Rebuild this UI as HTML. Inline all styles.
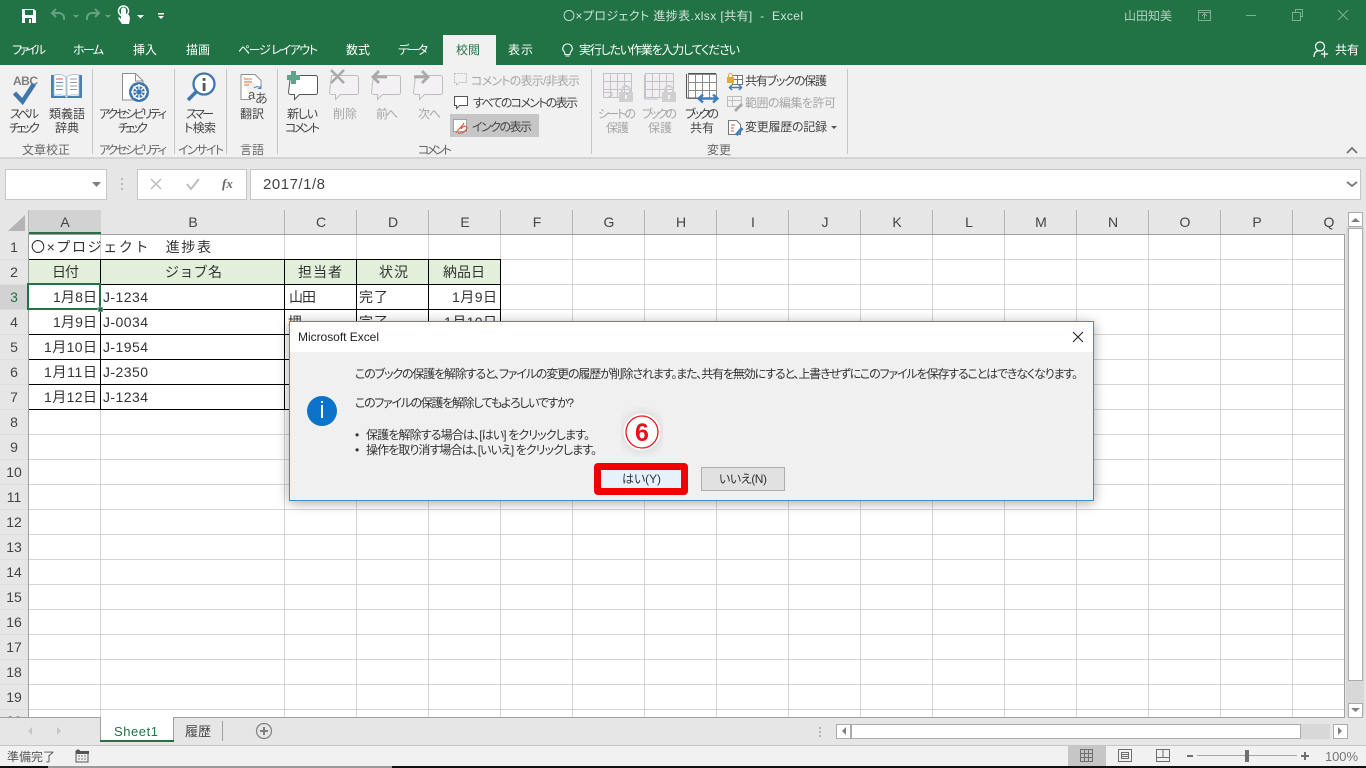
<!DOCTYPE html>
<html lang="ja"><head><meta charset="utf-8"><title>Excel</title>
<style>
html,body{margin:0;padding:0;background:#fff;overflow:hidden}
svg{display:block}
text{font-family:"Liberation Sans","Noto Sans CJK JP",sans-serif;font-size:12px;fill:#444;white-space:pre;font-feature-settings:"palt"}
.w{fill:#fff}.d{fill:#a6a6a6}.g{fill:#666}.c{font-size:14px;fill:#333;font-feature-settings:normal}.h{font-size:14px;fill:#444;text-anchor:middle;font-feature-settings:normal}
.b{font-size:12px;fill:#333}
.l{shape-rendering:crispEdges}
</style></head><body>
<svg xmlns="http://www.w3.org/2000/svg" width="1366" height="768" viewBox="0 0 1366 768">
<defs>
<filter id="s" x="-5%" y="-15%" width="110%" height="130%"><feGaussianBlur stdDeviation="6"/></filter>
<g id="bub"><path d="M1.500 1.500h25a2 2 0 0 1 2 2v15a2 2 0 0 1-2 2h-16l-5 5v-5h-4a2 2 0 0 1-2-2z" /></g>
<g id="gr"><path d="M.5.5h28v24h-28zM.5 8.500h28M.5 16.500h28M7.500.5v24M14.500.5v24M21.500.5v24"/></g>
<g id="lock"><rect x="0" y="6" width="14" height="10" rx="1" fill="#cfcfd2"/><path d="M3 6.500V4a4 4 0 0 1 8 0v2.500" fill="none" stroke="#cfcfd2" stroke-width="2"/><rect x="6" y="9" width="2" height="4" fill="#f1f1f1"/></g>
</defs>

<!-- Title bar / tabs -->
<rect width="1366" height="65" fill="#217346"/>
<rect x="0" y="65" width="1366" height="93" fill="#f1f1f1"/>
<rect x="0" y="158" width="1366" height="560" fill="#e6e6e6"/>
<rect x="0" y="157" width="1366" height="2" fill="#d4d4d4" class="l"/>

<!-- QAT -->
<path d="M22 9h12l2 2v12H22z" fill="#fff"/><rect x="25" y="10" width="8" height="5" fill="#217346"/><rect x="25" y="18" width="7" height="5" fill="#217346"/><rect x="29" y="19" width="2" height="4" fill="#fff"/>
<path d="M56 9l-4 4 4 4M52 13h7a5 5 0 0 1 5 5v2" fill="none" stroke="#66a282" stroke-width="2"/>
<path d="M73 15h6l-3 3z" fill="#66a282"/>
<path d="M95 9l4 4-4 4M99 13h-7a5 5 0 0 0-5 5v2" fill="none" stroke="#66a282" stroke-width="2"/>
<path d="M105 15h6l-3 3z" fill="#66a282"/>
<path d="M121 15V10a2.500 2.500 0 0 1 5 0v4l3 1 1 3-1 6h-7l-4-6 1-1 2 2z" fill="#fff"/><circle cx="123.500" cy="11" r="5" fill="none" stroke="#fff" stroke-width="1.500"/>
<path d="M137 15h7l-3.500 3.500z" fill="#fff"/>
<rect x="158" y="13" width="6" height="1.500" fill="#fff"/><path d="M158 16h6l-3 3z" fill="#fff"/>

<text x="563" y="20" textLength="240" style="fill:#d3e3d9">〇×プロジェクト 進捗表.xlsx [共有]  -  Excel</text>
<text x="1124" y="20" textLength="48" style="fill:#b5d2c1">山田知美</text>
<g fill="none" stroke="#7fae94" stroke-width="1" class="l">
<path d="M1198.500 10.500h12v10h-12zM1198.500 12.500h12M1204.500 19v-5M1202 16l2.500-2.500 2.500 2.500"/>
<path d="M1246 15.500h10"/>
<path d="M1292.500 12.500h8v8h-8zM1295.500 12.500v-3h7v7h-2"/>
</g>
<path d="M1338 10l10 10M1348 10l-10 10" stroke="#7fae94" fill="none"/>

<rect x="443" y="35" width="53" height="30" fill="#f1f1f1"/>
<text class="w" x="12" y="54" textLength="34">ファイル</text>
<text class="w" x="73" y="54" textLength="31">ホーム</text>
<text class="w" x="133" y="54" textLength="24">挿入</text>
<text class="w" x="186" y="54" textLength="24">描画</text>
<text class="w" x="238" y="54" textLength="80">ページ レイアウト</text>
<text class="w" x="346" y="54" textLength="24">数式</text>
<text class="w" x="398" y="54" textLength="30">データ</text>
<text x="456" y="54" textLength="24" style="fill:#217346">校閲</text>
<text class="w" x="508" y="54" textLength="25">表示</text>
<path d="M567.500 44a4.500 4.500 0 0 0-3 8l.5 2.500h5l.5-2.500a4.500 4.500 0 0 0-3-8zM565.500 56h4" fill="none" stroke="#fff" stroke-width="1.100"/>
<text class="w" x="579" y="54" textLength="161">実行したい作業を入力してください</text>
<circle cx="1320" cy="46.500" r="4.500" fill="none" stroke="#fff" stroke-width="1.200"/>
<path d="M1314 57c0-5 2.500-6.500 6-6.500M1321 54h7M1324.500 50.500v7" fill="none" stroke="#fff" stroke-width="1.200"/>
<text class="w" x="1335" y="54" textLength="24">共有</text>

<!-- Ribbon separators -->
<path class="l" d="M92.500 69v85M174.500 69v85M226.500 69v85M277.500 69v85M591.500 69v85M847.500 69v85" stroke="#c6c6c6" fill="none"/>

<!-- Spell -->
<text x="13" y="85" textLength="25" style="font-size:12px;font-weight:bold;fill:#7f7f7f">ABC</text>
<path d="M14.500 93l8 8.500L34 84" fill="none" stroke="#3f76ad" stroke-width="4.500"/>
<text x="10" y="118" textLength="29">スペル</text>
<text x="9" y="132" textLength="31">チェック</text>
<!-- Book -->
<path d="M51 75h3v21h11l1.500 2h-15.500zM82 75h-3v21h-11l-1.500 2h15.500z" fill="#4a7fb5"/>
<path d="M54 75c5-1 9-.5 12 2v19c-3-1.500-7-1.500-12-1zM79 75c-5-1-9-.5-12 2v19c3-1.500 7-1.500 12-1z" fill="#fff" stroke="#9db6cf" stroke-width=".8"/>
<path d="M56 79h7" stroke="#d9604c"/><path d="M56 82.500h7M56 86h7M56 89.500h7" stroke="#6d94bd"/><path d="M70 79h7M70 82.500h7M70 86h7M70 89.500h7" stroke="#9a9a9a"/>
<text x="49" y="118" textLength="36">類義語</text>
<text x="55" y="132" textLength="24">辞典</text>
<text class="g" x="22" y="154" textLength="48">文章校正</text>
<!-- Accessibility -->
<path d="M122.500 73.500h13l7.500 7.500v19h-20.500z" fill="#fff" stroke="#8f8f8f"/><path d="M135.500 73.500v7.500h7.500" fill="none" stroke="#8f8f8f"/>
<circle cx="139" cy="92" r="10" fill="#3f76ad"/>
<circle cx="139" cy="92" r="6.500" fill="none" stroke="#fff" stroke-width="1.500"/>
<path d="M139 84v16M131 92h16M133.500 86.500l11 11M144.500 86.500l-11 11" stroke="#fff" stroke-width="1.300"/><circle cx="139" cy="92" r="2.500" fill="#3f76ad"/>
<text x="99" y="118" textLength="68">アクセシビリティ</text>
<text x="118" y="132" textLength="30">チェック</text>
<text class="g" x="99" y="154" textLength="68">アクセシビリティ</text>
<!-- Smart lookup -->
<circle cx="204" cy="84" r="10.500" fill="#fff" stroke="#3f76ad" stroke-width="2.300"/>
<path d="M196 92l-8 8" stroke="#3f76ad" stroke-width="3.500" fill="none"/>
<rect x="202.700" y="83" width="2.800" height="8" fill="#555"/><rect x="202.700" y="78" width="2.800" height="2.800" fill="#555"/>
<text x="186" y="118" textLength="28">スマー</text>
<text x="184" y="132" textLength="32">ト検索</text>
<text class="g" x="178" y="154" textLength="46">インサイト</text>
<!-- Translate -->
<path d="M241 74.500h14l6 6V88M251 99.500h-10V74.500" fill="#fff" stroke="#8f8f8f"/>
<path d="M244 79h8M244 82h8M244 85h5" stroke="#ed7d31" fill="none"/>
<path d="M254 88a5 5 0 0 1 7 0M261 85v3.500h-3" fill="none" stroke="#3f86c4"/>
<text x="248" y="99" style="font-size:13px;fill:#555">a</text>
<text x="255" y="103" style="font-size:13px;fill:#555">あ</text>
<text x="240" y="118" textLength="24">翻訳</text>
<text class="g" x="240" y="154" textLength="24">言語</text>
<!-- Comments -->
<use href="#bub" x="289" y="74" fill="#fff" stroke="#555" stroke-width="1"/>
<path d="M291 71h5v4h4v5h-4v4h-5v-4h-4v-5h4z" fill="#5da58a"/>
<text x="287" y="118" textLength="31">新しい</text>
<text x="285" y="132" textLength="35">コメント</text>
<use href="#bub" x="330" y="74" fill="#f4f1f5" stroke="#bdbdbd"/>
<path d="M331 70l13 13M344 70l-13 13" stroke="#a9a9a9" stroke-width="2.500"/>
<text class="d" x="333" y="118" textLength="24">削除</text>
<use href="#bub" x="372" y="74" fill="#f4f1f5" stroke="#bdbdbd"/>
<path d="M373 77h14M379 71l-6 6 6 6" fill="none" stroke="#a9a9a9" stroke-width="2.800"/>
<text class="d" x="376" y="118" textLength="22">前へ</text>
<use href="#bub" x="414" y="74" fill="#f4f1f5" stroke="#bdbdbd"/>
<path d="M414 77h14M422 71l6 6-6 6" fill="none" stroke="#a9a9a9" stroke-width="2.800"/>
<text class="d" x="418" y="118" textLength="23">次へ</text>
<text class="g" x="418" y="154" textLength="34">コメント</text>
<path d="M454.500 73.500h12v9h-7l-3 3v-3h-2z" fill="none" stroke="#bdbdbd" stroke-dasharray="2 1"/>
<text class="d" x="471" y="85" textLength="109">コメントの表示/非表示</text>
<path d="M454.500 96.500h13v9h-8l-3 3v-3h-2z" fill="#fff" stroke="#555"/>
<text x="473" y="107" textLength="105">すべてのコメントの表示</text>
<rect x="450" y="114" width="89" height="23" fill="#c6c6c6"/>
<rect x="453.500" y="119.500" width="13" height="12" fill="#fff" stroke="#666" stroke-dasharray="1 1"/>
<path d="M456 133c2-4 6-6 8-10M458 133c4 1 8-2 9-5-1-3-4-2-6 1" fill="none" stroke="#d9583a" stroke-width="1.200"/>
<text x="472" y="131" textLength="60">インクの表示</text>
<!-- Changes -->
<g fill="#f1eff2" stroke="#c4c2c6" class="l"><use href="#gr" x="603" y="73"/></g>
<path d="M603 92.500h9v3l-4 2" fill="none" stroke="#c4c2c6"/>
<use href="#lock" x="619" y="86"/>
<text class="d" x="598" y="118" textLength="38">シートの</text>
<text class="d" x="606" y="132" textLength="23">保護</text>
<g fill="#f1eff2" stroke="#c4c2c6" class="l"><use href="#gr" x="645" y="73"/></g>
<path d="M644.500 75v24h14" fill="none" stroke="#c4c2c6"/>
<use href="#lock" x="662" y="86"/>
<text class="d" x="642" y="118" textLength="35">ブックの</text>
<text class="d" x="648" y="132" textLength="24">保護</text>
<g fill="#fff" stroke="#8a8a8a" class="l"><use href="#gr" x="688" y="74"/></g>
<path d="M686.500 74v24h11" fill="none" stroke="#555"/>
<path d="M688 73.500h28" stroke="#555" class="l"/>
<path d="M700 98.500h16M703 94.500l-4.500 4 4.500 4M713 94.500l4.500 4-4.500 4" fill="none" stroke="#3f7fbe" stroke-width="2.400"/>
<text x="685" y="118" textLength="34">ブックの</text>
<text x="690" y="132" textLength="24">共有</text>
<text x="745" y="85" textLength="82">共有ブックの保護</text>
<text class="d" x="745" y="107" textLength="91">範囲の編集を許可</text>
<text x="745" y="131" textLength="82">変更履歴の記録</text>
<path d="M831 126h6l-3 3z" fill="#555"/>
<text class="g" x="707" y="154" textLength="24">変更</text>
<g fill="#fff" stroke="#777" class="l"><path d="M732.500 75.500h10v9h-10zM732.500 79.500h10M737.500 75.500v9"/></g>
<rect x="727" y="77" width="7" height="6" fill="#e2a93c"/><path d="M728.500 77v-1.500a2 2 0 0 1 4 0V77" fill="none" stroke="#e2a93c"/>
<path d="M730 87.500h11M732 85l-2.500 2.500 2.500 2.500M739 85l2.500 2.500-2.500 2.500" fill="none" stroke="#3f7fbe" stroke-width="1.500"/>
<g fill="#f1f1f1" stroke="#bdbdbd" class="l"><path d="M727.500 96.500h14v10h-14zM727.500 100.500h14M732.500 96.500v10"/></g>
<path d="M734 110l7-7 2 2-7 7z" fill="#a9a9a9"/>
<path d="M728.500 120.500h8l4 4v10h-12z" fill="#fff" stroke="#777"/><path d="M731 125h4M731 128h3M731 131h3" stroke="#d9583a"/>
<path d="M735 134l6-7 2.500 2-6 7z" fill="#3f7fbe"/>
<path d="M1347 153l5-5 5 5" fill="none" stroke="#777" stroke-width="1.800"/>

<!-- Formula bar -->
<g class="l" fill="#fff" stroke="#c6c6c6">
<rect x="5.500" y="169.500" width="101" height="30"/>
<rect x="137.500" y="169.500" width="109" height="30"/>
<rect x="250.500" y="169.500" width="1110" height="30"/>
</g>
<path d="M92 182h9l-4.500 5z" fill="#808080"/>
<path d="M122 178v2M122 183v2M122 188v2" stroke="#a6a6a6" stroke-width="1.500"/>
<path d="M151 179l10 10M161 179l-10 10" stroke="#bdbdbd" stroke-width="1.500"/>
<path d="M187 184l4 5 8-10" fill="none" stroke="#bdbdbd" stroke-width="2"/>
<text x="222" y="188" style="font-family:'Liberation Serif',serif;font-style:italic;font-weight:bold;font-size:13px;fill:#666">fx</text>
<path d="M1347 182l5 4 5-4" fill="none" stroke="#777" stroke-width="1.800"/>
<text x="263" y="189" textLength="62" style="font-size:15px;fill:#444">2017/1/8</text>

<!-- Grid -->
<rect x="29" y="235" width="1315" height="482" fill="#fff"/>
<rect x="29" y="210" width="72" height="24" fill="#d2d2d2"/>
<rect x="0" y="285" width="28" height="25" fill="#d2d2d2"/>
<path d="M8 231l17-16v16z" fill="#b4b4b4"/>
<path class="l" fill="none" stroke="#b5b5b5" d="M284.500 210v24M356.500 210v24M428.500 210v24M500.500 210v24M572.500 210v24M644.500 210v24M716.500 210v24M788.500 210v24M860.500 210v24M932.500 210v24M1004.500 210v24M1076.500 210v24M1148.500 210v24M1220.500 210v24M1292.500 210v24M28.500 210v24"/>
<path class="l" fill="none" stroke="#d4d4d4" d="M100.500 235V717M284.500 235V717M356.500 235V717M428.500 235V717M500.500 235V717M572.500 235V717M644.500 235V717M716.500 235V717M788.500 235V717M860.500 235V717M932.500 235V717M1004.500 235V717M1076.500 235V717M1148.500 235V717M1220.500 235V717M1292.500 235V717
M29 259.500H1344M29 284.500H1344M29 309.500H1344M29 334.500H1344M29 359.500H1344M29 384.500H1344M29 409.500H1344M29 434.500H1344M29 459.500H1344M29 484.500H1344M29 509.500H1344M29 534.500H1344M29 559.500H1344M29 584.500H1344M29 609.500H1344M29 634.500H1344M29 659.500H1344M29 684.500H1344M29 709.500H1344"/>
<path class="l" fill="none" stroke="#dcdcdc" d="M0 259.500H28M0 284.500H28M0 309.500H28M0 334.500H28M0 359.500H28M0 384.500H28M0 409.500H28M0 434.500H28M0 459.500H28M0 484.500H28M0 509.500H28M0 534.500H28M0 559.500H28M0 584.500H28M0 609.500H28M0 634.500H28M0 659.500H28M0 684.500H28M0 709.500H28"/>
<path class="l" fill="none" stroke="#9f9f9f" d="M28.500 234V717M28 234.500H1344M1344.500 234V717"/>
<rect x="29" y="232" width="72" height="2" fill="#217346"/>
<rect x="29" y="260" width="471" height="24" fill="#e2efda"/>
<path class="l" fill="none" stroke="#000" d="M29 259.500H500.500M29 284.500H500.500M29 309.500H500.500M29 334.500H500.500M29 359.500H500.500M29 384.500H500.500M29 409.500H500.500M100.500 259V410M284.500 259V410M356.500 259V410M428.500 259V410M500.500 259V410"/>

<text class="h" x="65" y="227">A</text><text class="h" x="193" y="227">B</text><text class="h" x="321" y="227">C</text><text class="h" x="393" y="227">D</text><text class="h" x="465" y="227">E</text><text class="h" x="537" y="227">F</text><text class="h" x="609" y="227">G</text><text class="h" x="681" y="227">H</text><text class="h" x="753" y="227">I</text><text class="h" x="825" y="227">J</text><text class="h" x="897" y="227">K</text><text class="h" x="969" y="227">L</text><text class="h" x="1041" y="227">M</text><text class="h" x="1113" y="227">N</text><text class="h" x="1185" y="227">O</text><text class="h" x="1257" y="227">P</text><text class="h" x="1329" y="227">Q</text>

<text class="h" x="14" y="252">1</text><text class="h" x="14" y="277">2</text><text class="h" x="14" y="302" style="fill:#217346">3</text><text class="h" x="14" y="327">4</text><text class="h" x="14" y="352">5</text><text class="h" x="14" y="377">6</text><text class="h" x="14" y="402">7</text><text class="h" x="14" y="427">8</text><text class="h" x="14" y="452">9</text><text class="h" x="14" y="477">10</text><text class="h" x="14" y="502">11</text><text class="h" x="14" y="527">12</text><text class="h" x="14" y="552">13</text><text class="h" x="14" y="577">14</text><text class="h" x="14" y="602">15</text><text class="h" x="14" y="627">16</text><text class="h" x="14" y="652">17</text><text class="h" x="14" y="677">18</text><text class="h" x="14" y="702">19</text><text class="h" x="14" y="726">20</text>

<text class="c" x="31" y="252" textLength="180">〇×プロジェクト　進捗表</text>
<text class="c" x="52" y="277" textLength="27">日付</text>
<text class="c" x="165" y="277" textLength="57">ジョブ名</text>
<text class="c" x="298" y="277" textLength="44">担当者</text>
<text class="c" x="379" y="277" textLength="29">状況</text>
<text class="c" x="443" y="277" textLength="42">納品日</text>
<text class="c" x="53" y="302" textLength="44">1月8日</text>
<text class="c" x="103" y="302" textLength="45">J-1234</text>
<text class="c" x="289" y="302" textLength="27">山田</text>
<text class="c" x="359" y="302" textLength="29">完了</text>
<text class="c" x="452" y="302" textLength="45">1月9日</text>
<text class="c" x="53" y="327" textLength="44">1月9日</text>
<text class="c" x="103" y="327" textLength="45">J-0034</text>
<text class="c" x="288" y="327">埋</text>
<text class="c" x="359" y="327" textLength="29">完了</text>
<text class="c" x="444" y="327" textLength="53">1月10日</text>
<text class="c" x="44" y="352" textLength="53">1月10日</text>
<text class="c" x="103" y="352" textLength="45">J-1954</text>
<text class="c" x="44" y="377" textLength="53">1月11日</text>
<text class="c" x="103" y="377" textLength="45">J-2350</text>
<text class="c" x="44" y="402" textLength="53">1月12日</text>
<text class="c" x="103" y="402" textLength="45">J-1234</text>

<rect class="l" x="28" y="284" width="72" height="25" fill="none" stroke="#217346" stroke-width="2"/>
<rect x="98" y="307" width="5" height="5" fill="#217346" stroke="#fff" stroke-width=".5"/>

<!-- V scrollbar -->
<rect x="1345" y="210" width="21" height="508" fill="#e6e6e6"/>
<rect x="1346" y="227" width="18" height="490" fill="#d8d8d8"/>
<rect class="l" x="1348.500" y="212.500" width="14" height="14" fill="#fff" stroke="#ababab"/>
<path d="M1351 222h9l-4.500-4z" fill="#808080"/>
<rect class="l" x="1348.500" y="228.500" width="14" height="452" fill="#fff" stroke="#ababab"/>
<rect class="l" x="1348.500" y="703.500" width="14" height="14" fill="#fff" stroke="#ababab"/>
<path d="M1351 708h9l-4.500 4z" fill="#808080"/>

<!-- Sheet tabs -->
<rect x="0" y="718" width="1366" height="27" fill="#e6e6e6"/>
<path class="l" d="M0 717.500H1345" stroke="#9f9f9f"/>
<path d="M32 727v8l-4-4zM57 727v8l4-4z" fill="#c6c6c6"/>
<rect x="100" y="717" width="74" height="25" fill="#fff"/>
<path class="l" d="M100.500 717v25M173.500 717v25M222.500 721v20" stroke="#9f9f9f" fill="none"/>
<rect x="100" y="740" width="74" height="2" fill="#217346"/>
<text x="114" y="736" textLength="44" style="font-size:13px;fill:#217346">Sheet1</text>
<text x="185" y="736" textLength="26" style="font-size:13px;fill:#444">履歴</text>
<circle cx="264" cy="731" r="7.500" fill="none" stroke="#808080" stroke-width="1.200"/>
<path d="M260 731h8M264 727v8" stroke="#808080" stroke-width="2"/>
<path d="M820 727v2M820 731v2M820 735v2" stroke="#a6a6a6" stroke-width="1.500"/>
<rect class="l" x="836.500" y="724.500" width="14" height="14" fill="#fff" stroke="#ababab"/>
<path d="M846 727v8l-4-4z" fill="#808080"/>
<rect x="851" y="724" width="479" height="15" fill="#d8d8d8"/>
<rect class="l" x="851.500" y="724.500" width="449" height="14" fill="#fff" stroke="#ababab"/>
<rect class="l" x="1333.500" y="724.500" width="14" height="14" fill="#fff" stroke="#ababab"/>
<path d="M1338 727v8l4-4z" fill="#808080"/>

<!-- Status bar -->
<rect x="0" y="745" width="1366" height="21" fill="#f1f1f1"/>
<path class="l" d="M0 745.500H1366" stroke="#c6c6c6"/>
<text x="7" y="761" textLength="48" style="fill:#555">準備完了</text>
<circle cx="78" cy="752" r="2.500" fill="#555"/>
<path class="l" d="M76 751.500h12v10.500h-12z" fill="#f1f1f1" stroke="#555"/>
<rect x="76" y="751" width="13" height="3" fill="#555"/>
<path d="M78 756h9M78 759h9" stroke="#777" stroke-dasharray="2 1"/>
<rect x="1068" y="746" width="38" height="20" fill="#c6c6c6"/>
<path class="l" fill="none" stroke="#6f6f6f" d="M1080.500 749.500h12v12h-12zM1080.500 753.500h12M1080.500 757.500h12M1084.500 749.500v12M1088.500 749.500v12"/>
<path class="l" fill="none" stroke="#6f6f6f" d="M1118.500 749.500h13v12h-13zM1121.500 752.500h7v6h-7zM1122 754.500h6M1122 756.500h6"/>
<path class="l" fill="none" stroke="#6f6f6f" d="M1156.500 749.500h13v12h-13zM1156.500 757.500h6.500V749.500M1163 757.500h6.500"/>
<rect x="1187" y="755" width="6" height="2" fill="#6f6f6f"/>
<rect x="1197" y="755" width="100" height="1" fill="#a6a6a6"/>
<rect x="1245" y="750" width="4" height="12" fill="#6f6f6f"/>
<path d="M1301 756h8M1305 752v8" stroke="#6f6f6f" stroke-width="2"/>
<text x="1325" y="761" textLength="33" style="font-size:13px;fill:#777">100%</text>
<rect x="0" y="766" width="1366" height="2" fill="#9a9a9a"/>
<rect x="0" y="766" width="48" height="2" fill="#111"/>
<rect x="392" y="766" width="974" height="2" fill="#111"/>

<!-- Dialog -->
<rect x="289" y="323" width="805" height="180" fill="#000" opacity=".35" filter="url(#s)"/>
<rect x="289" y="321" width="805" height="180" fill="#f0f0f0"/>
<rect x="290" y="322" width="803" height="30" fill="#fff"/>
<rect class="l" x="289.500" y="321.500" width="804" height="179" fill="none" stroke="#3a8fd1"/>
<text x="298" y="341" textLength="81" style="font-size:12px;fill:#222">Microsoft Excel</text>
<path d="M1073 332l10 10M1083 332l-10 10" stroke="#222" stroke-width="1.100"/>
<circle cx="322" cy="411" r="15" fill="#0b73c9"/>
<rect x="321" y="405" width="2" height="13" fill="#fff"/><rect x="321" y="401" width="2" height="2" fill="#fff"/>
<text class="b" x="355" y="378" textLength="723">このブックの保護を解除すると、ファイルの変更の履歴が削除されます。また、共有を無効にすると、上書きせずにこのファイルを保存することはできなくなります。</text>
<text class="b" x="355" y="407" textLength="219">このファイルの保護を解除してもよろしいですか?</text>
<text class="b" x="355" y="439">•</text>
<text class="b" x="366" y="439" textLength="224">保護を解除する場合は、[はい] をクリックします。</text>
<text class="b" x="355" y="454">•</text>
<text class="b" x="366" y="454" textLength="231">操作を取り消す場合は、[いいえ] をクリックします。</text>
<rect x="594" y="463" width="94" height="32" rx="4" fill="#f00000"/>
<rect x="601" y="470" width="80" height="18" fill="#e5f1fb"/>
<text class="b" x="622" y="483" textLength="39">はい(Y)</text>
<rect class="l" x="701.500" y="467.500" width="83" height="23" fill="#e1e1e1" stroke="#adadad"/>
<text class="b" x="719" y="483" textLength="48">いいえ(N)</text>
<circle cx="642" cy="432" r="19" fill="#000" opacity=".12" filter="url(#s)"/>
<circle cx="642" cy="432" r="18.500" fill="#fff"/>
<circle cx="642" cy="432" r="16" fill="#fff" stroke="#e8141c" stroke-width="1.300"/>
<text x="642" y="441" text-anchor="middle" style="font-size:25px;font-weight:bold;fill:#e8141c">6</text>
</svg>
</body></html>
